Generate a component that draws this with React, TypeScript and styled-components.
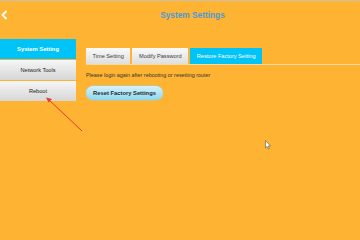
import React from "react";
import styled, { createGlobalStyle } from "styled-components";

const Global = createGlobalStyle`
  html, body { margin: 0; padding: 0; }
  body { width: 360px; height: 240px; overflow: hidden; background: #feb332; font-family: "Liberation Sans", Arial, sans-serif; }
`;

const Page = styled.div`
  position: relative;
  width: 360px;
  height: 240px;
  background: #feb332;
  display: flex;
  flex-direction: column;
`;

const TopLine = styled.div`
  height: 1px;
  background: #cdbfa6;
`;

const Header = styled.div`
  height: 28px;
  display: flex;
  align-items: center;
`;

const BackBtn = styled.div`
  width: 10px;
  height: 28px;
  display: flex;
  align-items: center;
  justify-content: flex-start;
  padding-left: 1px;
  box-sizing: border-box;
`;

const Title = styled.div`
  flex: 1;
  text-align: center;
  padding-left: 15px;
  color: #4a9ad6;
  font-weight: bold;
  font-size: 8.3px;
`;

const Body = styled.div`
  display: flex;
  margin-top: 10px;
`;

const Sidebar = styled.div`
  width: 76px;
  display: flex;
  flex-direction: column;
  gap: 1px;
`;

const NavItem = styled.div<{ $active?: boolean }>`
  height: 20px;
  display: flex;
  align-items: center;
  justify-content: center;
  font-size: ${(p) => (p.$active ? "5.8px" : "5.6px")};
  font-weight: ${(p) => (p.$active ? "bold" : "normal")};
  color: ${(p) => (p.$active ? "#ffffff" : "#222222")};
  background: ${(p) =>
    p.$active ? "#00c4f7" : "linear-gradient(#f6f6f6, #d6d6d6)"};
`;

const Main = styled.div`
  flex: 1;
  padding: 9px 0 0 10px;
  display: flex;
  flex-direction: column;
`;

const TabBar = styled.div`
  display: flex;
  gap: 2px;
  border-bottom: 1px solid #f7d9a2;
`;

const Tab = styled.div<{ $active?: boolean }>`
  height: 16px;
  padding: 0 6.6px;
  display: flex;
  align-items: center;
  font-size: 5.6px;
  color: ${(p) => (p.$active ? "#ffffff" : "#3a3a3a")};
  background: ${(p) =>
    p.$active ? "#00c4f7" : "linear-gradient(#fafafa, #dedede)"};
`;

const Hint = styled.div`
  margin-top: 7px;
  font-size: 5.4px;
  color: #333333;
`;

const ResetBtn = styled.div`
  margin-top: 8px;
  width: 77px;
  height: 14px;
  border-radius: 7px;
  display: flex;
  align-items: center;
  justify-content: center;
  font-size: 5.8px;
  font-weight: bold;
  color: #1d2a33;
  background: linear-gradient(#d6f3fb, #8fd7ec);
  box-shadow: 0 0 0 0.5px #9ccfdd;
`;

const Overlay = styled.svg`
  position: absolute;
  left: 0;
  top: 0;
  pointer-events: none;
`;

export default function App() {
  return (
    <Page>
      <Global />
      <TopLine />
      <Header>
        <BackBtn>
          <svg width="7" height="10" viewBox="0 0 7 10">
            <path d="M5.5 1 L1.5 5 L5.5 9" stroke="#fff" strokeWidth="1.8" fill="none" />
          </svg>
        </BackBtn>
        <Title>System Settings</Title>
      </Header>
      <Body>
        <Sidebar>
          <NavItem $active>System Setting</NavItem>
          <NavItem>Network Tools</NavItem>
          <NavItem>Reboot</NavItem>
        </Sidebar>
        <Main>
          <TabBar>
            <Tab>Time Setting</Tab>
            <Tab>Modify Password</Tab>
            <Tab $active>Restore Factory Setting</Tab>
          </TabBar>
          <Hint>Please login again after rebooting or resetting router</Hint>
          <ResetBtn>Reset Factory Settings</ResetBtn>
        </Main>
      </Body>
      <Overlay width="360" height="240" viewBox="0 0 360 240">
        <line x1="82" y1="131" x2="49" y2="100" stroke="#e53a2e" strokeWidth="1" />
        <path d="M46 97.5 L52 99 L48.5 102.5 Z" fill="#e53a2e" />
        <path
          d="M265.5 140.5 L265.5 148 L267.2 146.4 L268.4 149 L269.4 148.5 L268.3 146 L270.5 146 Z"
          fill="#fff"
          stroke="#555"
          strokeWidth="0.6"
        />
      </Overlay>
    </Page>
  );
}
